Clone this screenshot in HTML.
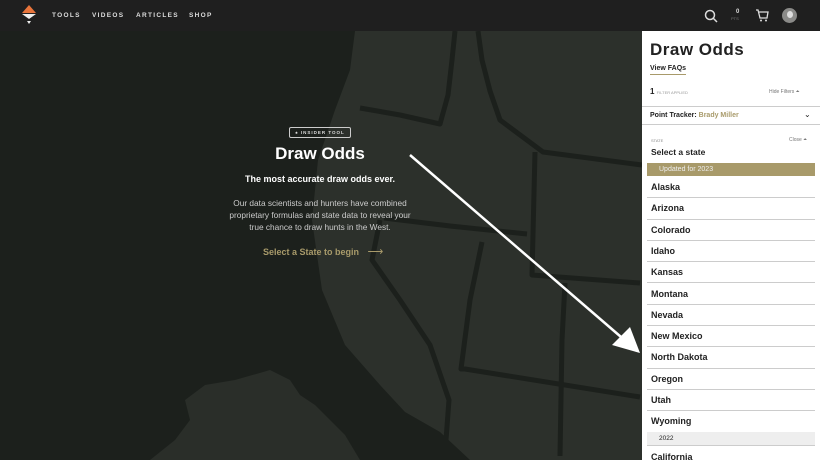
<!DOCTYPE html>
<html style="overflow:hidden;width:820px;height:460px"><head><meta charset="utf-8"><style>
*{margin:0;padding:0;box-sizing:border-box}
body{width:820px;height:460px;overflow:hidden;background:#1c201c;font-family:"Liberation Sans",sans-serif;position:relative}
.nav{position:absolute;left:0;top:0;width:820px;height:31px;background:#1f1f1f}
.nav a{position:absolute;top:12px;color:#ddd;font-size:6.5px;font-weight:bold;letter-spacing:1.3px}
.panel{position:absolute;left:642px;top:31px;width:178px;height:429px;background:#fff;color:#222;overflow:hidden}
.abs{position:absolute}
.item{position:absolute;left:5px;width:168px;height:21.3px;border-bottom:1px solid #ccc;font-size:9px;font-weight:bold;padding:5px 0 0 4px;color:#222}
</style></head><body>
<svg class="abs" style="left:0;top:31px" width="642" height="429" viewBox="0 31 642 429">
<polygon fill="#2c302b" points="355,31 642,31 642,460 470,460 440,432 405,412 380,385 345,345 322,290 312,220 318,160 335,110 350,70"/>
<polygon fill="#2a2e29" points="205,385 235,380 270,370 290,380 300,395 315,405 330,420 345,435 360,460 150,460 175,440 190,420 185,400"/>
<g stroke="#1c201c" stroke-width="5" fill="none" stroke-linejoin="round">
<polyline points="478,31 482,60 490,91 500,120 543,152 642,165"/>
<polyline points="360,108 400,115 440,124 448,95 452,60 455,31"/>
<polyline points="384,218 450,226 527,234"/>
<polyline points="380,220 372,260 400,300 430,345 449,400 446,440"/>
<polyline points="482,242 470,300 461,369 465,369 640,397"/>
<polyline points="535,152 532,275 640,283"/>
<polyline points="565,283 562,340 560,456"/>
</g>
<line x1="410" y1="155" x2="628" y2="343" stroke="#fff" stroke-width="2.5"/>
<polygon fill="#fff" points="640,353 612,345 630,327"/>
</svg>
<div class="nav">
<svg class="abs" style="left:20px;top:5px" width="18" height="20" viewBox="0 0 18 20"><polygon points="9,0 16,8 2,8" fill="#e8743b"/><polygon points="2,9 16,9 9,14" fill="#eee"/><polygon points="7,16 11,16 9,19" fill="#eee"/></svg>
<a style="left:52px">TOOLS</a><a style="left:92px">VIDEOS</a><a style="left:136px">ARTICLES</a><a style="left:189px">SHOP</a>
<svg class="abs" style="left:704px;top:9px" width="14" height="14"><circle cx="6" cy="6" r="4.5" stroke="#ddd" stroke-width="1.5" fill="none"/><line x1="9" y1="9" x2="13" y2="13" stroke="#ddd" stroke-width="1.5"/></svg>
<div class="abs" style="left:736px;top:9px;color:#ddd;font-size:6px;font-weight:bold">0</div>
<div class="abs" style="left:731px;top:16px;color:#777;font-size:4px">PTS</div>
<svg class="abs" style="left:755px;top:9px" width="14" height="13"><path d="M1 1h2l2 8h7l1-6H4" stroke="#ddd" stroke-width="1.3" fill="none"/><circle cx="6" cy="11.5" r="1" fill="#ddd"/><circle cx="11" cy="11.5" r="1" fill="#ddd"/></svg>
<div class="abs" style="left:782px;top:8px;width:15px;height:15px;border-radius:50%;background:#8a8a88"><div style="margin:3px auto 0;width:6px;height:7px;border-radius:50%;background:#ddd"></div></div>
</div>
<div class="abs" style="left:289px;top:127px;width:62px;height:11px;border:1px solid #ccc;border-radius:2px;color:#ddd;font-size:4.5px;font-weight:bold;letter-spacing:1px;text-align:center;line-height:9px">♠ INSIDER TOOL</div>
<div class="abs" style="left:220px;top:144px;width:200px;text-align:center;color:#fff;font-size:17px;font-weight:bold">Draw Odds</div>
<div class="abs" style="left:200px;top:174px;width:240px;text-align:center;color:#fff;font-size:9px;font-weight:bold">The most accurate draw odds ever.</div>
<div class="abs" style="left:228px;top:198px;width:184px;text-align:center;color:#ccc;font-size:8.3px;line-height:11.8px">Our data scientists and hunters have combined proprietary formulas and state data to reveal your true chance to draw hunts in the West.</div>
<div class="abs" style="left:263px;top:245px;color:#a89a6a;font-size:9px;font-weight:bold">Select a State to begin <span style="margin-left:6px;font-weight:normal;font-size:11px">⟶</span></div>
<div class="panel">
<div class="abs" style="left:8px;top:9px;font-size:17px;font-weight:bold;letter-spacing:0.5px">Draw Odds</div>
<div class="abs" style="left:8px;top:34px;font-size:7px;font-weight:bold;border-bottom:1px solid #a89a6a;padding-bottom:2px">View FAQs</div>
<div class="abs" style="left:8px;top:56px;font-size:8px;font-weight:bold">1 <span style="font-size:4px;color:#999;font-weight:normal">FILTER APPLIED</span></div>
<div class="abs" style="left:127px;top:58px;font-size:5px;color:#777">Hide Filters ⏶</div>
<div class="abs" style="left:0;top:75px;width:178px;border-top:1px solid #ccc"></div>
<div class="abs" style="left:8px;top:81px;font-size:7px;font-weight:bold">Point Tracker: <span style="color:#a89a6a">Brady Miller</span></div>
<div class="abs" style="left:162px;top:79px;font-size:8px">⌄</div>
<div class="abs" style="left:0;top:93px;width:178px;border-top:1px solid #ccc"></div>
<div class="abs" style="left:9px;top:107px;font-size:4px;color:#888">STATE</div>
<div class="abs" style="left:147px;top:106px;font-size:5px;color:#777">Close ⏶</div>
<div class="abs" style="left:9px;top:116px;font-size:8.5px;font-weight:bold">Select a state</div>
<div class="abs" style="left:5px;top:132px;width:168px;height:13px;background:#a89a6a;color:#eee;font-size:7px;padding:3px 0 0 12px">Updated for 2023</div>
<div class="item" style="top:146px">Alaska</div>
<div class="item" style="top:167.3px">Arizona</div>
<div class="item" style="top:188.6px">Colorado</div>
<div class="item" style="top:209.9px">Idaho</div>
<div class="item" style="top:231.2px">Kansas</div>
<div class="item" style="top:252.5px">Montana</div>
<div class="item" style="top:273.8px">Nevada</div>
<div class="item" style="top:295.1px">New Mexico</div>
<div class="item" style="top:316.4px">North Dakota</div>
<div class="item" style="top:337.7px">Oregon</div>
<div class="item" style="top:359px">Utah</div>
<div class="item" style="top:380.3px;border:none">Wyoming</div>
<div class="abs" style="left:5px;top:401px;width:168px;height:14px;background:#eee;font-size:6.5px;padding:3px 0 0 12px;border-bottom:1px solid #ccc">2022</div>
<div class="item" style="top:416px;border:none">California</div>
</div>
</body></html>
